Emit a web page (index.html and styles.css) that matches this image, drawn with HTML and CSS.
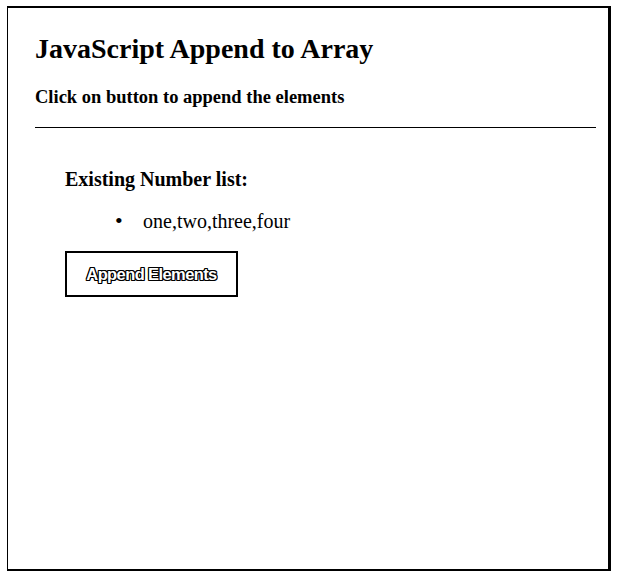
FILE: index.html
```html
<!DOCTYPE html>
<html>
<head>
<meta charset="utf-8">
<link rel="stylesheet" href="styles.css">
</head>
<body>
<div class="frame">
  <h2 class="title">JavaScript Append to Array</h2>
  <h4 class="subtitle">Click on button to append the elements</h4>
  <hr class="rule">
  <div class="content">
    <h4 class="label">Existing Number list:</h4>
    <ul class="list">
      <li class="item">one,two,three,four</li>
    </ul>
    <button class="btn">Append Elements</button>
  </div>
</div>
</body>
</html>
```
FILE: styles.css
```css
html, body {
  margin: 0;
  padding: 0;
  background: #fff;
}
body {
  font-family: "Liberation Serif", "Times New Roman", serif;
  color: #000;
}
.frame {
  box-sizing: border-box;
  margin: 6px 0 0 7px;
  width: 604px;
  height: 565px;
  border-left: 1px solid #000;
  border-top: 2px solid #000;
  border-right: 3px solid #000;
  border-bottom: 2px solid #000;
  padding: 0 12px 0 27px;
}
.title {
  margin: 25px 0 0 0;
  font-size: 28px;
  font-weight: bold;
  line-height: 32px;
}
.subtitle {
  margin: 22px 0 0 0;
  font-size: 18.5px;
  font-weight: bold;
  line-height: 20px;
}
.rule {
  margin: 20px 0 0 0;
  border: 0;
  border-top: 1px solid #000;
  height: 0;
}
.content {
  padding-left: 30px;
}
.label {
  margin: 40px 0 0 0;
  font-size: 20px;
  font-weight: bold;
  line-height: 22px;
}
.list {
  margin: 20px 0 0 0;
  padding-left: 50px;
  list-style: none;
  font-size: 20px;
  line-height: 22px;
}
.item {
  display: flex;
}
.item::before {
  content: "\2022";
  width: 28px;
  flex: none;
  font-size: 22px;
}
.btn {
  margin-top: 19px;
  width: 173px;
  height: 46px;
  background: #fff;
  border: 2px solid #000;
  font-family: "Liberation Sans", Arial, sans-serif;
  font-size: 16.5px;
  font-weight: bold;
  color: #fff;
  text-shadow: 1px 0 0 #000, -1px 0 0 #000, 0 1px 0 #000, 0 -1px 0 #000, 1px 1px 0 #000, -1px -1px 0 #000, 1px -1px 0 #000, -1px 1px 0 #000;
  letter-spacing: -0.6px;
  cursor: pointer;
}
```
